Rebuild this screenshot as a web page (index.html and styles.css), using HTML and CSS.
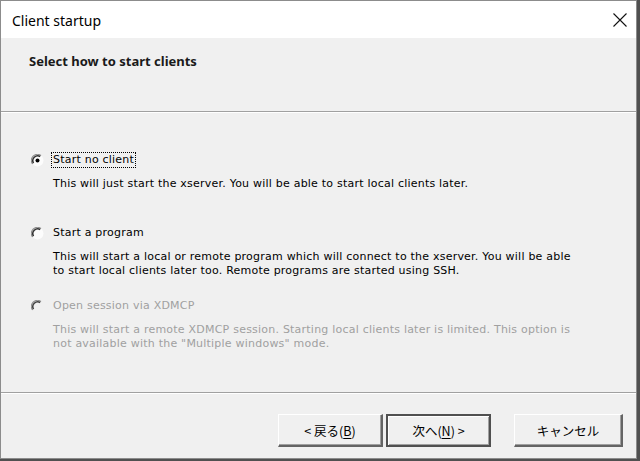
FILE: index.html
```html
<!DOCTYPE html>
<html>
<head>
<meta charset="utf-8">
<link rel="stylesheet" href="styles.css">
</head>
<body>
<div class="window">
  <div class="titlebar">
    <span class="title">Client startup</span>
    <svg class="close" width="14" height="14" viewBox="0 0 14 14"><path d="M0.5 0.5 L13.5 13.5 M13.5 0.5 L0.5 13.5" stroke="#111" stroke-width="1.1" fill="none"/></svg>
  </div>
  <div class="header">
    <span class="heading">Select how to start clients</span>
  </div>
  <div class="sep"></div>
  <div class="content">
    <div class="option">
      <div class="row">
        <svg class="radio" width="13" height="13" viewBox="0 0 13 13">
          <circle cx="6.5" cy="6.5" r="6" fill="#fcfcfc"/>
          <path d="M1.6 10 A6 6 0 0 1 10 1.6" stroke="#8a8a8a" stroke-width="1.2" fill="none"/>
          <path d="M2.5 9.2 A4.9 4.9 0 0 1 9.2 2.5" stroke="#303030" stroke-width="1.5" fill="none"/>
          <circle cx="6.5" cy="6.5" r="2" fill="#000"/>
        </svg>
        <span class="label focus">Start no client</span>
      </div>
      <div class="desc">This will just start the xserver. You will be able to start local clients later.</div>
    </div>
    <div class="option">
      <div class="row">
        <svg class="radio" width="13" height="13" viewBox="0 0 13 13">
          <circle cx="6.5" cy="6.5" r="6" fill="#fcfcfc"/>
          <path d="M1.6 10 A6 6 0 0 1 10 1.6" stroke="#8a8a8a" stroke-width="1.2" fill="none"/>
          <path d="M2.5 9.2 A4.9 4.9 0 0 1 9.2 2.5" stroke="#303030" stroke-width="1.5" fill="none"/>
        </svg>
        <span class="label">Start a program</span>
      </div>
      <div class="desc">This will start a local or remote program which will connect to the xserver. You will be able<br>to start local clients later too. Remote programs are started using SSH.</div>
    </div>
    <div class="option disabled">
      <div class="row">
        <svg class="radio" width="13" height="13" viewBox="0 0 13 13">
          <circle cx="6.5" cy="6.5" r="6" fill="#f0f0f0"/>
          <path d="M1.6 10 A6 6 0 0 1 10 1.6" stroke="#8a8a8a" stroke-width="1.2" fill="none"/>
          <path d="M2.5 9.2 A4.9 4.9 0 0 1 9.2 2.5" stroke="#404040" stroke-width="1.5" fill="none"/>
        </svg>
        <span class="label">Open session via XDMCP</span>
      </div>
      <div class="desc">This will start a remote XDMCP session. Starting local clients later is limited. This option is<br>not available with the "Multiple windows" mode.</div>
    </div>
  </div>
  <div class="sep"></div>
  <div class="footer">
    <div class="btn">&lt; 戻る(<u>B</u>)</div>
    <div class="btn default">次へ(<u>N</u>) &gt;</div>
    <div class="btn cancel">キャンセル</div>
  </div>
</div>
</body>
</html>
```
FILE: styles.css
```css
html, body {
  margin: 0;
  padding: 0;
}
body {
  width: 640px;
  height: 461px;
  background: #505050;
  overflow: hidden;
}
.window {
  width: 637px;
  height: 459px;
  border: 1px solid #8c8c8c;
  background: #f0f0f0;
  display: flex;
  flex-direction: column;
  box-sizing: border-box;
}
.titlebar {
  height: 37px;
  background: #fff;
  display: flex;
  align-items: center;
  justify-content: space-between;
  padding: 0 9px 0 11px;
}
.title {
  font-family: "Noto Sans", "Open Sans", sans-serif;
  font-size: 14px;
  color: #000;
  margin-top: 1px;
}
.header {
  height: 73px;
  padding: 14px 0 0 28px;
  box-sizing: border-box;
}
.heading {
  font-family: "Noto Sans", "Open Sans", sans-serif;
  font-weight: bold;
  font-size: 13px;
  color: #1a1a1a;
}
.sep {
  border-top: 1px solid #a0a0a0;
  border-bottom: 1px solid #fff;
}
.content {
  flex: 1;
  padding: 39px 0 0 30px;
  font-family: "DejaVu Sans", "Noto Sans CJK JP", sans-serif;
  font-size: 11px;
  letter-spacing: 0.22px;
  color: #000;
}
.option {
  height: 73px;
}
.row {
  display: flex;
  align-items: center;
  height: 16px;
}
.radio {
  flex: none;
}
.label {
  margin-left: 7px;
  padding: 0 1px;
  line-height: 14px;
  border: 1px solid transparent;
}
.focus {
  border: 1px dotted #000;
}
.desc {
  margin: 9px 0 0 22px;
  line-height: 14px;
}
.disabled {
  color: #a0a0a0;
}
.footer {
  height: 64px;
  display: flex;
  align-items: flex-start;
  padding: 20px 0 0 277px;
  box-sizing: border-box;
}
.btn {
  width: 105px;
  height: 33px;
  box-sizing: border-box;
  background: #f0f0f0;
  border-top: 1px solid #fff;
  border-left: 1px solid #fff;
  border-right: 2px solid #646464;
  border-bottom: 2px solid #646464;
  box-shadow: inset -1px -1px 0 #a0a0a0;
  display: flex;
  align-items: center;
  justify-content: center;
  font-family: "Noto Sans CJK JP", sans-serif;
  font-size: 12.5px;
  color: #000;
}
.default {
  margin-left: 3px;
  border: 2px solid #505050;
  box-shadow: inset 1px 1px 0 #fff, inset -1px -1px 0 #a0a0a0;
}
.cancel {
  margin-left: 23px;
  width: 109px;
}
u {
  text-decoration: underline;
  text-underline-offset: 2px;
}
```
